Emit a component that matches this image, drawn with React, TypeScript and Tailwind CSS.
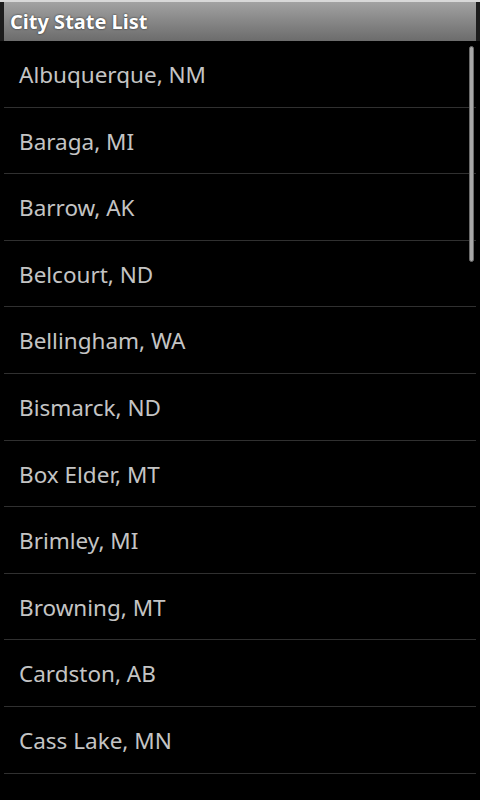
const cities = [
  "Albuquerque, NM",
  "Baraga, MI",
  "Barrow, AK",
  "Belcourt, ND",
  "Bellingham, WA",
  "Bismarck, ND",
  "Box Elder, MT",
  "Brimley, MI",
  "Browning, MT",
  "Cardston, AB",
  "Cass Lake, MN",
];

const App = () => {
  return (
    <div className="w-[480px] h-[800px] bg-black overflow-hidden flex flex-col relative" style={{ fontFamily: '"Noto Sans", "Open Sans", sans-serif' }}>
      <div className="h-[2px] bg-[#d8d8d8] shrink-0"></div>
      <div className="flex h-[39px] shrink-0 bg-[#1c1c1c]">
        <div className="w-[4px]"></div>
        <div className="flex-1 flex items-center pl-[6px] bg-gradient-to-b from-[#a2a2a2] to-[#6c6c6c]">
          <span className="text-white font-bold text-[20px] leading-none [text-shadow:0_0_2px_rgba(0,0,0,0.8)]">City State List</span>
        </div>
        <div className="w-[4px]"></div>
      </div>
      <div className="flex flex-col px-[4px]">
        {cities.map((c) => (
          <div key={c} className="h-[66.6px] shrink-0 flex items-center border-b border-[#303030] pl-[15px] pt-[3px]">
            <span className="text-[#c4c4c4] text-[22.5px] leading-none">{c}</span>
          </div>
        ))}
      </div>
      <div className="absolute left-[469px] top-[46px] w-[5px] h-[216px] rounded-full bg-[#a8a8a8] border border-[#6a6a6a]"></div>
    </div>
  );
};

export default App;
